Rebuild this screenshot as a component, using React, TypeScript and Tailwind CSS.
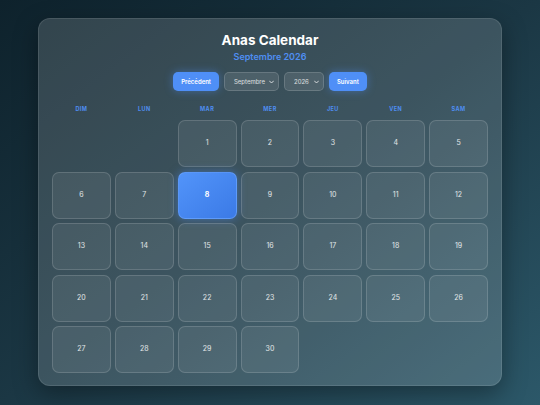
import React, { useState } from 'react'

const MONTHS = [
  'Janvier', 'Février', 'Mars', 'Avril', 'Mai', 'Juin',
  'Juillet', 'Août', 'Septembre', 'Octobre', 'Novembre', 'Décembre'
]
const DAYS = ['DIM', 'LUN', 'MAR', 'MER', 'JEU', 'VEN', 'SAM']

export default function App() {
  const [month, setMonth] = useState(8)
  const [year, setYear] = useState(2026)
  const [selected, setSelected] = useState(8)

  const firstDay = new Date(year, month, 1).getDay()
  const daysInMonth = new Date(year, month + 1, 0).getDate()

  const cells: (number | null)[] = []
  for (let i = 0; i < firstDay; i++) cells.push(null)
  for (let d = 1; d <= daysInMonth; d++) cells.push(d)

  const prev = () => {
    if (month === 0) { setMonth(11); setYear(year - 1) } else setMonth(month - 1)
  }
  const next = () => {
    if (month === 11) { setMonth(0); setYear(year + 1) } else setMonth(month + 1)
  }

  return (
    <div
      className="w-[540px] h-[405px] flex justify-center pt-[18px] bg-gradient-to-br from-[#0e222c] via-[#1b3744] to-[#2c5869] overflow-hidden"
      style={{ fontFamily: 'Inter, "Noto Sans", sans-serif' }}
    >
      <div className="w-[464px] h-[368px] rounded-xl bg-white/15 border border-white/10 shadow-[0_8px_24px_rgba(0,0,0,0.35)] px-[12px] pt-[12px]">
        <div className="flex flex-col items-center">
          <h1 className="text-[13.5px] leading-[19px] font-bold text-white">Anas Calendar</h1>
          <div className="text-[9px] leading-[13px] font-semibold text-[#4f8ef2]">
            {MONTHS[month]} {year}
          </div>
          <div className="flex items-center gap-[5px] mt-[9px]">
            <button
              onClick={prev}
              className="h-[19px] px-[8px] flex items-center leading-none rounded-[5px] bg-[#4f8ff7] text-white text-[6px] font-semibold shadow-[0_0_8px_rgba(79,143,247,0.45)]"
            >
              Précédent
            </button>
            <div className="relative flex">
              <select
                value={month}
                onChange={(e) => setMonth(Number(e.target.value))}
                className="appearance-none h-[19px] w-[55px] py-0 pl-[9px] leading-none rounded-[5px] bg-white/10 border border-white/15 text-white/80 text-[6px] outline-none"
              >
                {MONTHS.map((m, i) => (
                  <option key={m} value={i} className="text-black">{m}</option>
                ))}
              </select>
              <Chevron />
            </div>
            <div className="relative flex">
              <select
                value={year}
                onChange={(e) => setYear(Number(e.target.value))}
                className="appearance-none h-[19px] w-[40px] py-0 pl-[9px] leading-none rounded-[5px] bg-white/10 border border-white/15 text-white/80 text-[6px] outline-none"
              >
                {[2024, 2025, 2026, 2027, 2028].map((y) => (
                  <option key={y} value={y} className="text-black">{y}</option>
                ))}
              </select>
              <Chevron />
            </div>
            <button
              onClick={next}
              className="h-[19px] px-[8px] flex items-center leading-none rounded-[5px] bg-[#4f8ff7] text-white text-[6px] font-semibold shadow-[0_0_8px_rgba(79,143,247,0.45)]"
            >
              Suivant
            </button>
          </div>
        </div>

        <div className="grid grid-cols-7 gap-x-[4px] px-[1px] mt-[11px]">
          {DAYS.map((d) => (
            <div key={d} className="h-[14px] flex items-center justify-center text-[5.5px] font-bold tracking-[0.08em] text-[#4f8ef2]">
              {d}
            </div>
          ))}
        </div>

        <div className="grid grid-cols-7 gap-x-[4px] gap-y-[4.5px] px-[1px] mt-[4px]">
          {cells.map((d, i) =>
            d === null ? (
              <div key={`e-${i}`} className="h-[47px]" />
            ) : d === selected ? (
              <button
                key={d}
                onClick={() => setSelected(d)}
                className="h-[47px] rounded-[7px] bg-gradient-to-br from-[#5294fa] to-[#3b7ae6] border border-[#6aa4ff]/60 text-white text-[7px] font-bold shadow-[0_0_10px_rgba(79,143,247,0.5)]"
              >
                {d}
              </button>
            ) : (
              <button
                key={d}
                onClick={() => setSelected(d)}
                className="h-[47px] rounded-[7px] bg-white/[0.07] border border-white/15 text-white/85 text-[7px]"
              >
                {d}
              </button>
            )
          )}
        </div>
      </div>
    </div>
  )
}

function Chevron() {
  return (
    <svg
      className="absolute right-[5px] top-1/2 -translate-y-1/2 pointer-events-none"
      width="5"
      height="4"
      viewBox="0 0 10 6"
      fill="none"
    >
      <path d="M1 1l4 4 4-4" stroke="white" strokeOpacity="0.85" strokeWidth="1.8" strokeLinecap="round" strokeLinejoin="round" />
    </svg>
  )
}
